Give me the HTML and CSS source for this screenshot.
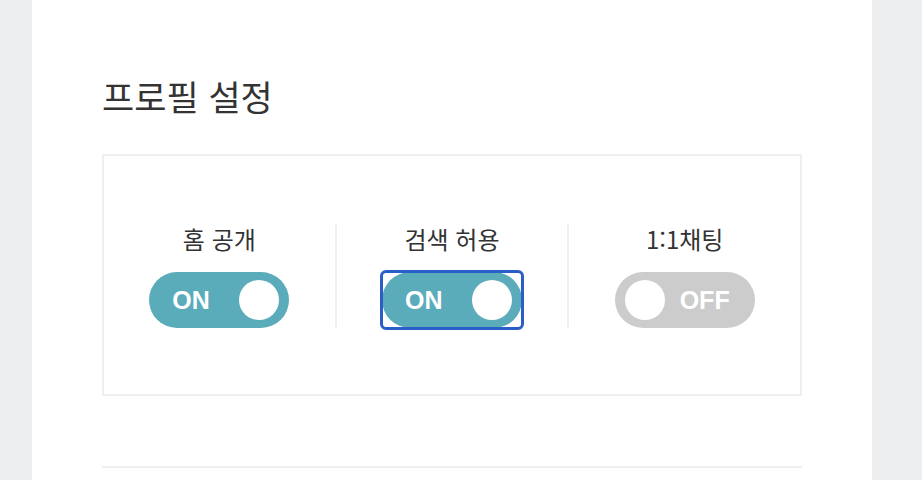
FILE: index.html
```html
<!DOCTYPE html>
<html lang="ko">
<head>
<meta charset="utf-8">
<title>프로필 설정</title>
<link rel="stylesheet" href="styles.css">
</head>
<body>
<div class="page">
  <main class="panel">
    <h2 class="title">프로필 설정</h2>
    <section class="settings">
      <div class="col">
        <div class="label">홈 공개</div>
        <button class="toggle-btn" type="button">
          <span class="pill on"><span class="txt">ON</span><span class="knob"></span></span>
        </button>
      </div>
      <div class="col">
        <div class="label">검색 허용</div>
        <button class="toggle-btn focused" type="button">
          <span class="pill on"><span class="txt">ON</span><span class="knob"></span></span>
        </button>
      </div>
      <div class="col">
        <div class="label">1:1채팅</div>
        <button class="toggle-btn" type="button">
          <span class="pill off"><span class="knob"></span><span class="txt">OFF</span></span>
        </button>
      </div>
    </section>
    <div class="rule"></div>
  </main>
</div>
</body>
</html>
```

FILE: styles.css
```css
html, body {
  margin: 0;
  padding: 0;
}
body {
  background: #eceef0;
  font-family: "Noto Sans CJK KR", "Noto Sans", sans-serif;
  color: #333;
}
.page {
  display: flex;
  height: 480px;
  overflow: hidden;
}
.panel {
  margin-left: 32px;
  width: 840px;
  background: #fff;
  padding: 76px 70px 0 70px;
  box-sizing: border-box;
}
.title {
  margin: 0;
  font-size: 35px;
  line-height: 40px;
  font-weight: 400;
  color: #333;
}
.settings {
  margin-top: 38px;
  border: 2px solid #efefef;
  padding: 68px 0 66px 0;
  display: flex;
}
.col {
  flex: 1;
  display: flex;
  flex-direction: column;
  align-items: center;
}
.col + .col {
  border-left: 2px solid #f0f0f0;
}
.label {
  font-size: 24px;
  line-height: 30px;
  color: #333;
  margin-bottom: 18px;
}
.toggle-btn {
  border: 0;
  padding: 0;
  margin: 0;
  background: transparent;
  border-radius: 4px;
  display: block;
  cursor: pointer;
}
.toggle-btn.focused {
  outline: 3px solid #2a5fc8;
  outline-offset: -1px;
}
.pill {
  width: 140px;
  height: 56px;
  border-radius: 28px;
  display: flex;
  align-items: center;
  justify-content: space-between;
  box-sizing: border-box;
}
.pill.on {
  background: #5aacbb;
  padding: 0 10px 0 23px;
}
.pill.off {
  background: #cccccc;
  padding: 0 25px 0 10px;
}
.knob {
  width: 40px;
  height: 40px;
  border-radius: 50%;
  background: #fff;
}
.txt {
  color: #fff;
  font-family: "Liberation Sans", Arial, sans-serif;
  font-weight: 700;
  font-size: 25px;
  line-height: 1;
}
.rule {
  margin-top: 70px;
  height: 2px;
  background: #efefef;
}
```
